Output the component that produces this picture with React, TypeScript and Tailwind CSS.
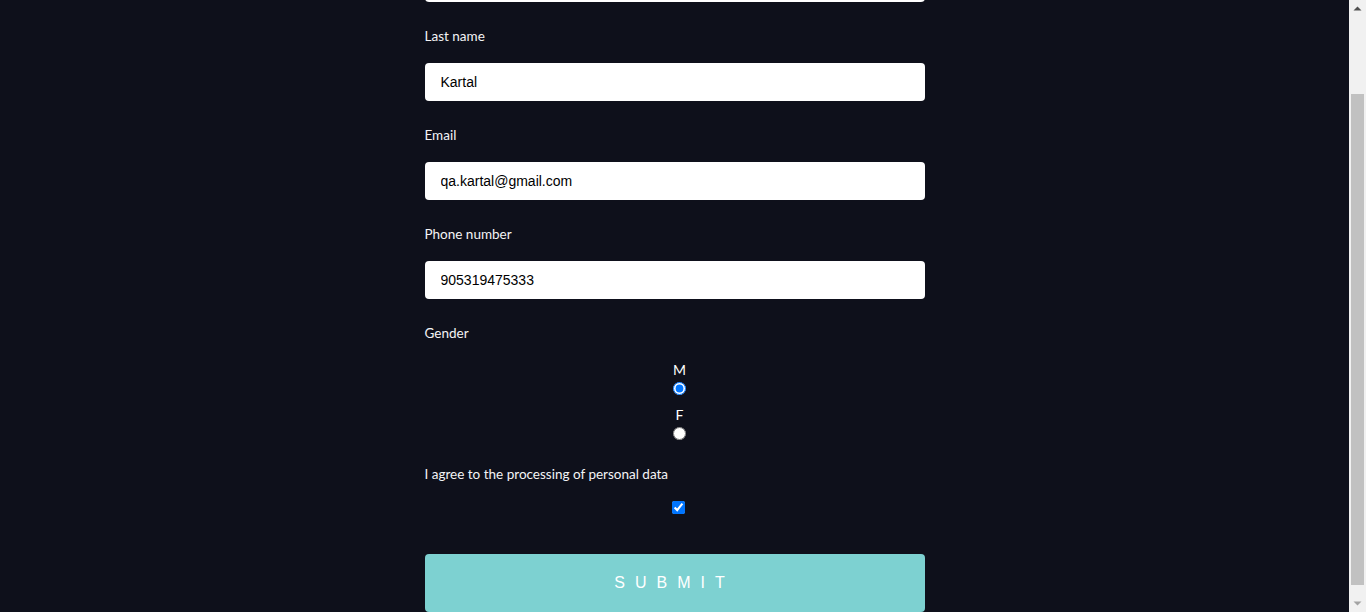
import React from "react";

const labelCls = "block h-5 text-[13.5px] leading-5 text-[#f4f4f6] font-['Lato',sans-serif]";
const inputCls =
  "block w-full h-[38px] rounded-[4px] bg-white px-4 text-[14px] text-black font-['Liberation_Sans',Arial,sans-serif] outline-none border-0";

function Field({ label, value }: { label: string; value: string }) {
  return (
    <div className="mt-6">
      <label className={labelCls}>{label}</label>
      <input className={`${inputCls} mt-[17px]`} defaultValue={value} />
    </div>
  );
}

export default function App() {
  return (
    <div className="flex h-[612px] w-full overflow-hidden bg-[#0e101b]">
      <main className="flex-1 flex justify-center">
        <form className="w-[500px] -mt-[36px]" onSubmit={(e) => e.preventDefault()}>
          <input className={inputCls} defaultValue="Ahmet" />
          <Field label="Last name" value="Kartal" />
          <Field label="Email" value="qa.kartal@gmail.com" />
          <Field label="Phone number" value="905319475333" />

          {/* Gender */}
          <div className="mt-6">
            <label className={labelCls}>Gender</label>
            <div className="mt-[19px] flex flex-col items-center pl-[10px]">
              <span className="h-4 text-[14px] leading-4 text-white font-['Lato',sans-serif]">M</span>
              <input type="radio" name="gender" defaultChecked className="mt-1 m-0 h-[13px] w-[13px]" />
              <span className="mt-3 h-4 text-[14px] leading-4 text-white font-['Lato',sans-serif]">F</span>
              <input type="radio" name="gender" className="mt-1 m-0 h-[13px] w-[13px]" />
            </div>
          </div>

          {/* Consent */}
          <div className="mt-6">
            <label className={labelCls}>I agree to the processing of personal data</label>
            <div className="mt-[17px] flex justify-center pl-[8px]">
              <input type="checkbox" defaultChecked className="m-0 h-[13px] w-[13px]" />
            </div>
          </div>

          <button
            type="submit"
            className="mt-10 block h-[58px] w-full rounded-[4px] bg-[#7dd1d1] text-[16px] tracking-[10px] text-white font-['Liberation_Sans',Arial,sans-serif]"
          >
            SUBMIT
          </button>
        </form>
      </main>

      {/* browser scrollbar */}
      <div className="flex w-[17px] flex-col items-center bg-[#f1f1f1]">
        <svg width="17" height="17" viewBox="0 0 17 17" className="shrink-0">
          <path d="M4.5 10.5 L8.5 6.5 L12.5 10.5 Z" fill="#505050" />
        </svg>
        <div className="mt-[77px] h-[491px] w-[13px] bg-[#c1c1c1]" />
        <div className="flex-1" />
        <svg width="17" height="17" viewBox="0 0 17 17" className="shrink-0">
          <path d="M4.5 6.5 L12.5 6.5 L8.5 10.5 Z" fill="#a3a3a3" />
        </svg>
      </div>
    </div>
  );
}
